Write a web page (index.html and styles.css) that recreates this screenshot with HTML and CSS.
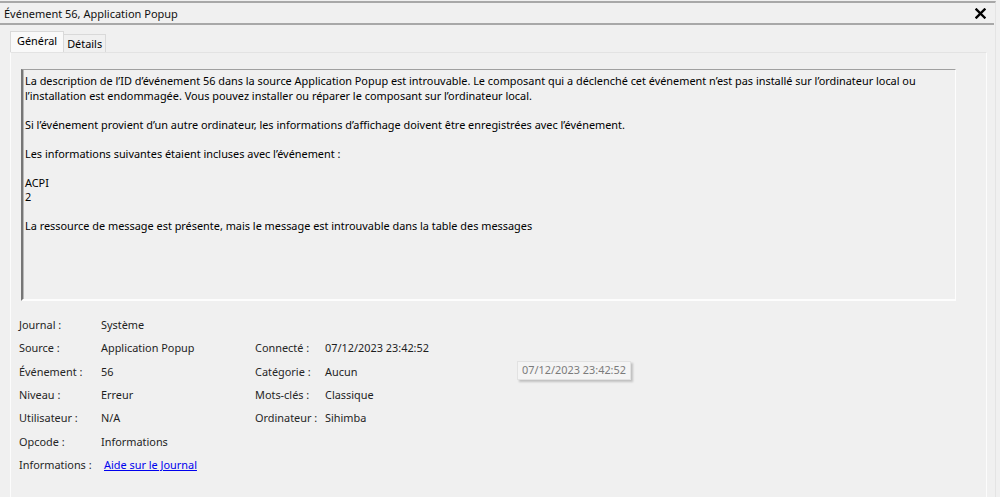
FILE: index.html
```html
<!DOCTYPE html>
<html lang="fr">
<head>
  <meta charset="utf-8">
  <title>Événement 56, Application Popup</title>
  <link rel="stylesheet" href="styles.css">
</head>
<body>
<div class="window">
  <div class="titlebar">
    <span class="title">Événement 56, Application Popup</span>
    <svg class="close" width="11" height="11" viewBox="0 0 11 11"><path d="M1.5 1.5 L9.5 9.5 M9.5 1.5 L1.5 9.5" stroke="#000" stroke-width="2.4" stroke-linecap="square"/></svg>
  </div>

  <div class="tabs">
    <span class="tab active">Général</span>
    <span class="tab">Détails</span>
  </div>

  <div class="panel">
    <div class="desc">La description de l’ID d’événement 56 dans la source Application Popup est introuvable. Le composant qui a déclenché cet événement n’est pas installé sur l’ordinateur local ou
l’installation est endommagée. Vous pouvez installer ou réparer le composant sur l’ordinateur local.

Si l’événement provient d’un autre ordinateur, les informations d’affichage doivent être enregistrées avec l’événement.

Les informations suivantes étaient incluses avec l’événement :

ACPI
2

La ressource de message est présente, mais le message est introuvable dans la table des messages</div>

    <div class="props">
      <span class="lbl">Journal :</span><span class="val">Système</span><span></span><span></span>
      <span class="lbl">Source :</span><span class="val">Application Popup</span><span class="lbl">Connecté :</span><span class="val">07/12/2023 23:42:52</span>
      <span class="lbl">Événement :</span><span class="val">56</span><span class="lbl">Catégorie :</span><span class="val">Aucun</span>
      <span class="lbl">Niveau :</span><span class="val">Erreur</span><span class="lbl">Mots-clés :</span><span class="val">Classique</span>
      <span class="lbl">Utilisateur :</span><span class="val">N/A</span><span class="lbl">Ordinateur :</span><span class="val">Sihimba</span>
      <span class="lbl">Opcode :</span><span class="val">Informations</span><span></span><span></span>
      <span class="lbl">Informations :</span><span class="val"><a class="link" href="#">Aide sur le Journal</a></span><span></span><span></span>
    </div>

    <div class="tooltip">07/12/2023 23:42:52</div>
  </div>
</div>
</body>
</html>
```

FILE: styles.css
```css
html, body {
  margin: 0;
  padding: 0;
  background: #f0f0f0;
  color: #000;
  font-family: "Noto Sans", "Open Sans", sans-serif;
  font-size: 10.9px;
  overflow: hidden;
}

.window {
  width: 996px;
  height: 497px;
  border-top: 2px solid #a8a8a8;
  margin-top: 1px;
  border-right: 1px solid #e4e4e4;
  box-sizing: border-box;
}

.titlebar {
  height: 20px;
  display: flex;
  align-items: center;
  justify-content: space-between;
  padding: 0 8px 0 4px;
  border-bottom: 2px solid #a8a8a8;
  margin-right: 1px;
}

.title { color: #111; font-size: 11px; }

.close { display: block; margin-top: 1px; }

.tabs {
  display: flex;
  align-items: flex-end;
  padding: 7px 0 0 10px;
  height: 20px;
}

.tab {
  display: block;
  height: 17px;
  line-height: 17px;
  padding: 0 3px;
  border: 1px solid #d9d9d9;
  border-bottom: none;
  border-left: none;
  background: #f0f0f0;
}

.tab.active {
  height: 20px;
  line-height: 18px;
  padding: 0 6px;
  border-left: 1px solid #d9d9d9;
  background: #f9f9f9;
}

.panel {
  position: relative;
  margin: 0 8px 0 10px;
  height: 444px;
  border: 1px solid #fcfcfc;
  border-top-color: #e3e3e3;
  padding: 16px 30px 0 10px;
}

.desc {
  height: 225px;
  white-space: pre-line;
  line-height: 14.5px;
  padding: 4px 3px 0 2px;
  border-top: 1px solid #a0a0a0;
  border-left: 2px solid #767676;
  border-right: 1px solid #fdfdfd;
  border-bottom: 2px solid #fdfdfd;
  box-shadow: inset 1px 0 #b8b8b8;
  color: #000;
}

.props {
  display: grid;
  grid-template-columns: 82px 154px 70px 1fr;
  grid-auto-rows: 23.33px;
  align-items: center;
  margin: 12px 0 0 -2px;
  color: #1e1e1e;
}

.lbl { color: #262626; }

.link {
  margin-left: 3px;
  color: #0000ee;
  text-decoration: underline;
}

.tooltip {
  position: absolute;
  left: 506px;
  top: 308px;
  height: 17px;
  line-height: 16px;
  padding: 0 4px;
  color: #7b7b7b;
  background: #f4f4f4;
  border: 1px solid #e2e2e2;
  box-shadow: 2px 2px 2px rgba(0, 0, 0, 0.2);
}
```
